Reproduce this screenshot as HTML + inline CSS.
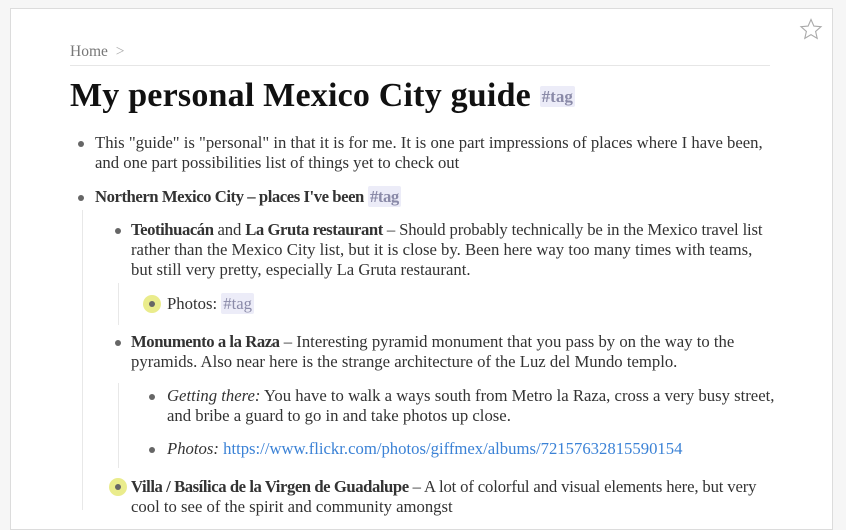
<!DOCTYPE html>
<html><head><meta charset="utf-8"><style>
html,body{margin:0;padding:0;background:#f6f6f6;width:846px;height:503px;overflow:hidden}
.card{position:absolute;left:10px;top:8px;width:821px;height:520px;background:#fff;border:1px solid #dcdcdc}
body{font-family:"Liberation Serif",serif;color:#333}
.t{position:absolute;white-space:nowrap;font-size:16.7px;letter-spacing:0}
.b{font-weight:bold;letter-spacing:-0.45px}
.tag{background:#ececf8;color:#8a8aa8;padding:1px 2px;border-radius:2px}
.dot{position:absolute;width:6px;height:6px;border-radius:50%;background:#666}
.hl{position:absolute;width:18px;height:18px;border-radius:50%;background:#eaec8c}
.vl{position:absolute;width:1px;background:#e8e8e8}
a{color:#3b82d6;text-decoration:none}
</style></head><body>
<div class="card"></div>
<svg style="position:absolute;left:799px;top:18px" width="24" height="22" viewBox="0 0 24 22"><path d="M12 1.5l2.9 6.6 7.1.6-5.4 4.7 1.6 7-6.2-3.7-6.2 3.7 1.6-7L2 8.7l7.1-.6z" fill="none" stroke="#aaa" stroke-width="1.1"/></svg>
<div class="t" style="left:70px;top:43px;color:#777;font-size:15.5px">Home <span style="color:#aaa;margin-left:4px">&gt;</span></div>
<div style="position:absolute;left:70px;top:65px;width:700px;height:1px;background:#e6e6e6"></div>
<div class="t" style="left:70px;top:77px;font-size:34px;font-weight:bold;color:#111;letter-spacing:0.2px">My personal Mexico City guide <span class="tag" style="font-size:17px;font-weight:bold;vertical-align:4px;letter-spacing:0">#tag</span></div>

<div class="dot" style="left:78px;top:141px"></div>
<div class="t" style="left:95px;top:133px">This "guide" is "personal" in that it is for me. It is one part impressions of places where I have been,</div>
<div class="t" style="left:95px;top:153px">and one part possibilities list of things yet to check out</div>

<div class="dot" style="left:78px;top:195px"></div>
<div class="t" style="left:95px;top:187px"><span class="b">Northern Mexico City – places I've been</span> <span class="tag b">#tag</span></div>
<div class="vl" style="left:82px;top:210px;height:300px"></div>

<div class="dot" style="left:115px;top:228px"></div>
<div class="t" style="left:131px;top:220px;letter-spacing:-0.15px"><span class="b">Teotihuacán</span> and <span class="b">La Gruta restaurant</span> – Should probably technically be in the Mexico travel list</div>
<div class="t" style="left:131px;top:240px">rather than the Mexico City list, but it is close by. Been here way too many times with teams,</div>
<div class="t" style="left:131px;top:260px">but still very pretty, especially La Gruta restaurant.</div>
<div class="vl" style="left:118px;top:283px;height:42px"></div>
<div class="hl" style="left:143px;top:295px"></div>
<div class="dot" style="left:149px;top:301px"></div>
<div class="t" style="left:167px;top:294px">Photos: <span class="tag">#tag</span></div>

<div class="dot" style="left:115px;top:340px"></div>
<div class="t" style="left:131px;top:332px"><span class="b">Monumento a la Raza</span> – Interesting pyramid monument that you pass by on the way to the</div>
<div class="t" style="left:131px;top:352px">pyramids. Also near here is the strange architecture of the Luz del Mundo templo.</div>
<div class="vl" style="left:118px;top:383px;height:85px"></div>
<div class="dot" style="left:149px;top:394px"></div>
<div class="t" style="left:167px;top:386px"><i>Getting there:</i> You have to walk a ways south from Metro la Raza, cross a very busy street,</div>
<div class="t" style="left:167px;top:406px">and bribe a guard to go in and take photos up close.</div>
<div class="dot" style="left:149px;top:447px"></div>
<div class="t" style="left:167px;top:439px"><i>Photos:</i> <a>https://www.flickr.com/photos/giffmex/albums/72157632815590154</a></div>

<div class="hl" style="left:109px;top:478px"></div>
<div class="dot" style="left:115px;top:484px"></div>
<div class="t" style="left:131px;top:477px;letter-spacing:-0.15px"><span class="b">Villa / Basílica de la Virgen de Guadalupe</span> – A lot of colorful and visual elements here, but very</div>
<div class="t" style="left:131px;top:497px">cool to see of the spirit and community amongst</div>
</body></html>
